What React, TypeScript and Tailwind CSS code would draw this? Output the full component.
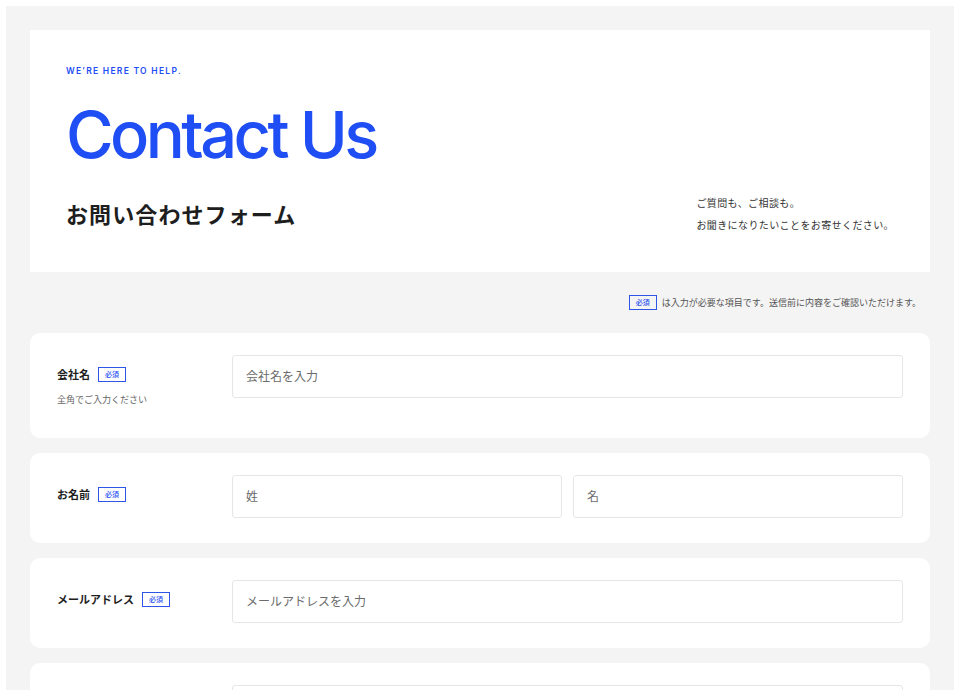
const JP = "font-['Inter','Noto_Sans_CJK_JP',sans-serif]"

function Badge() {
  return (
    <span className="inline-flex h-[15px] w-[28px] items-center justify-center border border-[#2d56e8] text-[7px] font-medium leading-none text-[#1f4ef5]">
      必須
    </span>
  )
}

function Field({ placeholder }: { placeholder: string }) {
  return (
    <input
      placeholder={placeholder}
      className="h-[43px] w-full min-w-0 rounded-[3px] border border-[#e6e6e6] bg-white px-[13px] text-[12px] text-[#222] outline-none placeholder:text-[#6b6b6b]"
    />
  )
}

function Row({ label, note, children }: { label: string; note?: string; children: React.ReactNode }) {
  return (
    <div className="grid grid-cols-[175px_1fr] rounded-[10px] bg-white px-[27px] pb-[25px] pt-[22px]">
      <div className="pt-[12px]">
        <div className="flex h-[15px] items-center gap-[8px]">
          <span className="pt-[2px] text-[11px] font-bold leading-none text-[#1e1e1e]">{label}</span>
          <Badge />
        </div>
        {note && <p className="mt-[11px] pb-[6px] text-[9px] leading-[14px] text-[#666]">{note}</p>}
      </div>
      {children}
    </div>
  )
}

export default function App() {
  return (
    <div className={`min-h-[690px] bg-white p-[6px] ${JP}`}>
      <div className="min-h-[684px] bg-[#f4f4f4] px-[24px] pt-[24px]">
        {/* hero */}
        <div className="flex h-[242px] items-end justify-between bg-white pb-[36px] pl-[36px] pr-[36px] pt-[36px]">
          <div className="flex h-full flex-col pb-[6px]">
            <p className="text-[8.5px] font-semibold uppercase leading-[10px] tracking-[0.15em] text-[#1f4ef5]">
              We’re here to help.
            </p>
            <h1 className="mt-[26px] font-['Inter',sans-serif] text-[65px] font-medium leading-[66px] tracking-[-0.055em] text-[#1f4ef5]">
              Contact Us
            </h1>
            <h2 className="mt-auto text-[22px] font-bold leading-[30px] tracking-[0.05em] text-[#1e1e1e]">
              お問い合わせフォーム
            </h2>
          </div>
          <div className="text-[10px] leading-[22px] tracking-[0.04em] text-[#333]">
            <p>ご質問も、ご相談も。</p>
            <p>お聞きになりたいことをお寄せください。</p>
          </div>
        </div>

        {/* note */}
        <div className="flex h-[61px] items-center justify-end gap-[5px] pr-[9px]">
          <Badge />
          <span className="text-[9px] text-[#555]">は入力が必要な項目です。送信前に内容をご確認いただけます。</span>
        </div>

        {/* form */}
        <div className="flex flex-col gap-[15px]">
          <Row label="会社名" note="全角でご入力ください">
            <Field placeholder="会社名を入力" />
          </Row>
          <Row label="お名前">
            <div className="grid grid-cols-2 gap-[11px]">
              <Field placeholder="姓" />
              <Field placeholder="名" />
            </div>
          </Row>
          <Row label="メールアドレス">
            <Field placeholder="メールアドレスを入力" />
          </Row>
          <Row label="電話番号">
            <Field placeholder="電話番号を入力" />
          </Row>
        </div>
      </div>
    </div>
  )
}
